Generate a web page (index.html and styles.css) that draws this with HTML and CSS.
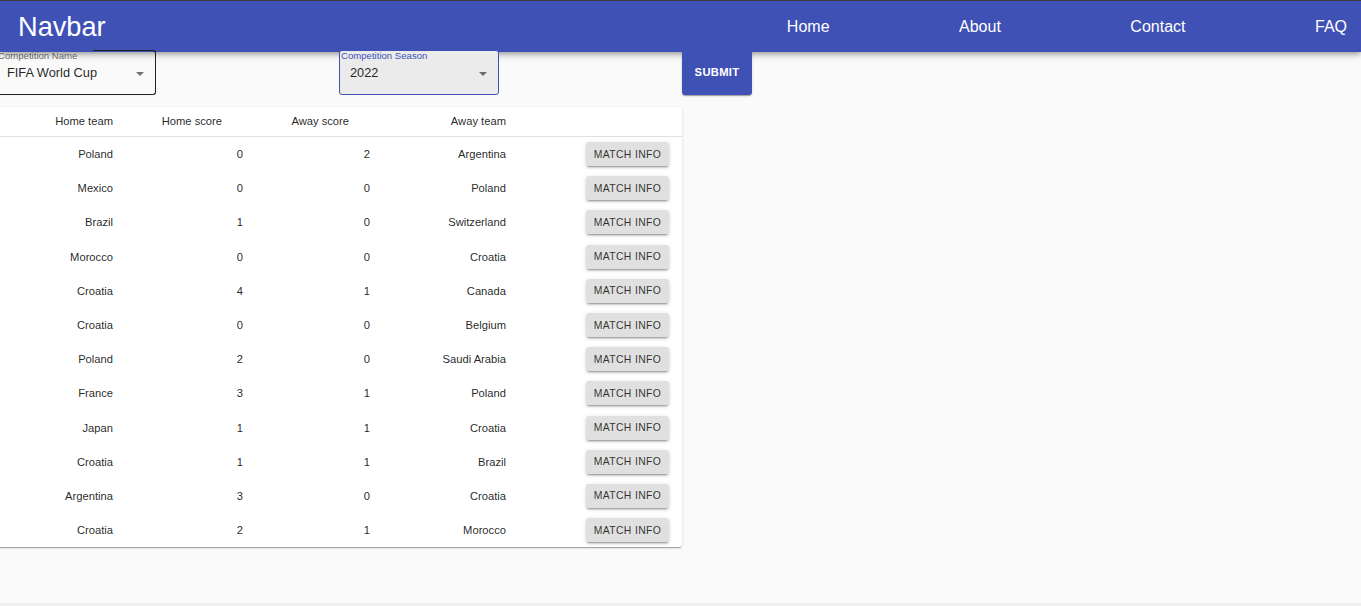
FILE: index.html
```html
<!DOCTYPE html>
<html lang="en">
<head>
<meta charset="utf-8">
<title>Navbar</title>
<link rel="stylesheet" href="styles.css">
</head>
<body>
<header class="navbar">
  <div class="brand">Navbar</div>
  <nav class="links">
    <a href="#">Home</a>
    <a href="#">About</a>
    <a href="#">Contact</a>
    <a href="#">FAQ</a>
  </nav>
</header>
<main class="content">
  <form class="filters">
    <div class="select outlined">
      <span class="label">Competition Name</span>
      <span class="value">FIFA World Cup</span>
      <span class="arrow"></span>
    </div>
    <div class="select focused">
      <span class="label">Competition Season</span>
      <span class="value">2022</span>
      <span class="arrow"></span>
    </div>
    <button type="button" class="submit">SUBMIT</button>
  </form>
  <div class="card">
    <table class="matches">
      <colgroup>
        <col class="c1"><col class="c2"><col class="c3"><col class="c4"><col class="c5">
      </colgroup>
      <thead>
        <tr><th>Home team</th><th class="sort">Home score</th><th class="sort">Away score</th><th>Away team</th><th></th></tr>
      </thead>
      <tbody>
        <tr><td>Poland</td><td>0</td><td>2</td><td>Argentina</td><td><button type="button" class="info">MATCH INFO</button></td></tr>
        <tr><td>Mexico</td><td>0</td><td>0</td><td>Poland</td><td><button type="button" class="info">MATCH INFO</button></td></tr>
        <tr><td>Brazil</td><td>1</td><td>0</td><td>Switzerland</td><td><button type="button" class="info">MATCH INFO</button></td></tr>
        <tr><td>Morocco</td><td>0</td><td>0</td><td>Croatia</td><td><button type="button" class="info">MATCH INFO</button></td></tr>
        <tr><td>Croatia</td><td>4</td><td>1</td><td>Canada</td><td><button type="button" class="info">MATCH INFO</button></td></tr>
        <tr><td>Croatia</td><td>0</td><td>0</td><td>Belgium</td><td><button type="button" class="info">MATCH INFO</button></td></tr>
        <tr><td>Poland</td><td>2</td><td>0</td><td>Saudi Arabia</td><td><button type="button" class="info">MATCH INFO</button></td></tr>
        <tr><td>France</td><td>3</td><td>1</td><td>Poland</td><td><button type="button" class="info">MATCH INFO</button></td></tr>
        <tr><td>Japan</td><td>1</td><td>1</td><td>Croatia</td><td><button type="button" class="info">MATCH INFO</button></td></tr>
        <tr><td>Croatia</td><td>1</td><td>1</td><td>Brazil</td><td><button type="button" class="info">MATCH INFO</button></td></tr>
        <tr><td>Argentina</td><td>3</td><td>0</td><td>Croatia</td><td><button type="button" class="info">MATCH INFO</button></td></tr>
        <tr><td>Croatia</td><td>2</td><td>1</td><td>Morocco</td><td><button type="button" class="info">MATCH INFO</button></td></tr>
      </tbody>
    </table>
  </div>
</main>
</body>
</html>
```
FILE: styles.css
```css
html {
  background: #efefef;
}
body {
  margin: 0;
  height: 603px;
  background: #fafafa;
  font-family: "Liberation Sans", Arial, sans-serif;
  color: rgba(0, 0, 0, 0.87);
  overflow: hidden;
}
.navbar {
  position: relative;
  display: flex;
  align-items: center;
  justify-content: space-between;
  height: 51px;
  border-top: 1px solid #3d3d3d;
  background: #3f51b5;
  color: #fff;
  padding: 0 14px 0 18px;
  box-shadow: 0 2px 4px -1px rgba(0,0,0,0.2), 0 4px 5px 0 rgba(0,0,0,0.14), 0 1px 10px 0 rgba(0,0,0,0.12);
}
.brand {
  font-size: 27.2px;
  line-height: 1;
  margin-top: 1px;
}
.links {
  display: flex;
  gap: 129.5px;
}
.links a {
  color: #fff;
  text-decoration: none;
  font-size: 16px;
  line-height: 1;
}
.content {
  margin-left: -4px;
}
.filters {
  display: flex;
  gap: 183px;
  height: 45px;
  margin-top: -2px;
}
.select {
  position: relative;
  width: 160px;
  box-sizing: border-box;
  border-radius: 3px;
}
.select.outlined {
  border: 1px solid #212121;
  border-top-color: transparent;
}
.select.outlined::before {
  content: "";
  position: absolute;
  top: -1px;
  left: 96px;
  right: -1px;
  height: 4px;
  border-top: 1px solid #212121;
  border-right: 1px solid #212121;
  border-top-right-radius: 3px;
}
.select.focused {
  border: 1px solid #3f51b5;
  background: #ebebeb;
}
.label {
  position: absolute;
  left: 1px;
  top: -1px;
  font-size: 9.6px;
  line-height: 11px;
  color: rgba(0, 0, 0, 0.6);
}
.focused .label {
  color: #3f51b5;
}
.value {
  position: absolute;
  left: 10px;
  top: 14px;
  font-size: 12.8px;
  line-height: 16px;
}
.arrow {
  position: absolute;
  right: 11px;
  top: 21px;
  width: 0;
  height: 0;
  border-left: 4px solid transparent;
  border-right: 4px solid transparent;
  border-top: 4px solid rgba(0, 0, 0, 0.54);
}
.submit {
  position: relative;
  width: 70px;
  padding: 0 0 2px;
  border: 0;
  border-radius: 3px;
  background: #3f51b5;
  color: #fff;
  font-family: "Liberation Sans", Arial, sans-serif;
  font-size: 11.2px;
  font-weight: bold;
  letter-spacing: 0.32px;
  box-shadow: 0 2px 1px -1px rgba(0,0,0,0.2), 0 1px 1px 0 rgba(0,0,0,0.14), 0 1px 3px 0 rgba(0,0,0,0.12);
}
.card {
  margin-top: 12px;
  width: 686px;
  background: #fff;
  border-radius: 3px;
  box-shadow: 0 2px 1px -1px rgba(0,0,0,0.2), 0 1px 1px 0 rgba(0,0,0,0.14), 0 1px 3px 0 rgba(0,0,0,0.12);
  overflow: hidden;
}
.matches {
  width: 686px;
  table-layout: fixed;
  border-collapse: collapse;
  font-size: 11.2px;
}
.c1 { width: 130px; }
.c2 { width: 130px; }
.c3 { width: 127px; }
.c4 { width: 136px; }
.c5 { width: 163px; }
.matches th {
  height: 27px;
  padding: 0 13px 2px;
  text-align: right;
  font-weight: normal;
  border-bottom: 1px solid #e0e0e0;
  vertical-align: middle;
}
.matches th.sort {
  padding-right: 34px;
}
.matches td {
  height: 34.2px;
  padding: 0 13px;
  text-align: right;
  vertical-align: middle;
}
.info {
  height: 24px;
  width: 83px;
  padding: 0;
  border: 0;
  border-radius: 3px;
  background: #e0e0e0;
  color: rgba(0, 0, 0, 0.8);
  font-family: "Liberation Sans", Arial, sans-serif;
  font-size: 10.4px;
  letter-spacing: 0.35px;
  vertical-align: middle;
  box-shadow: 0 3px 1px -2px rgba(0,0,0,0.2), 0 2px 2px 0 rgba(0,0,0,0.14), 0 1px 5px 0 rgba(0,0,0,0.12);
}
```
